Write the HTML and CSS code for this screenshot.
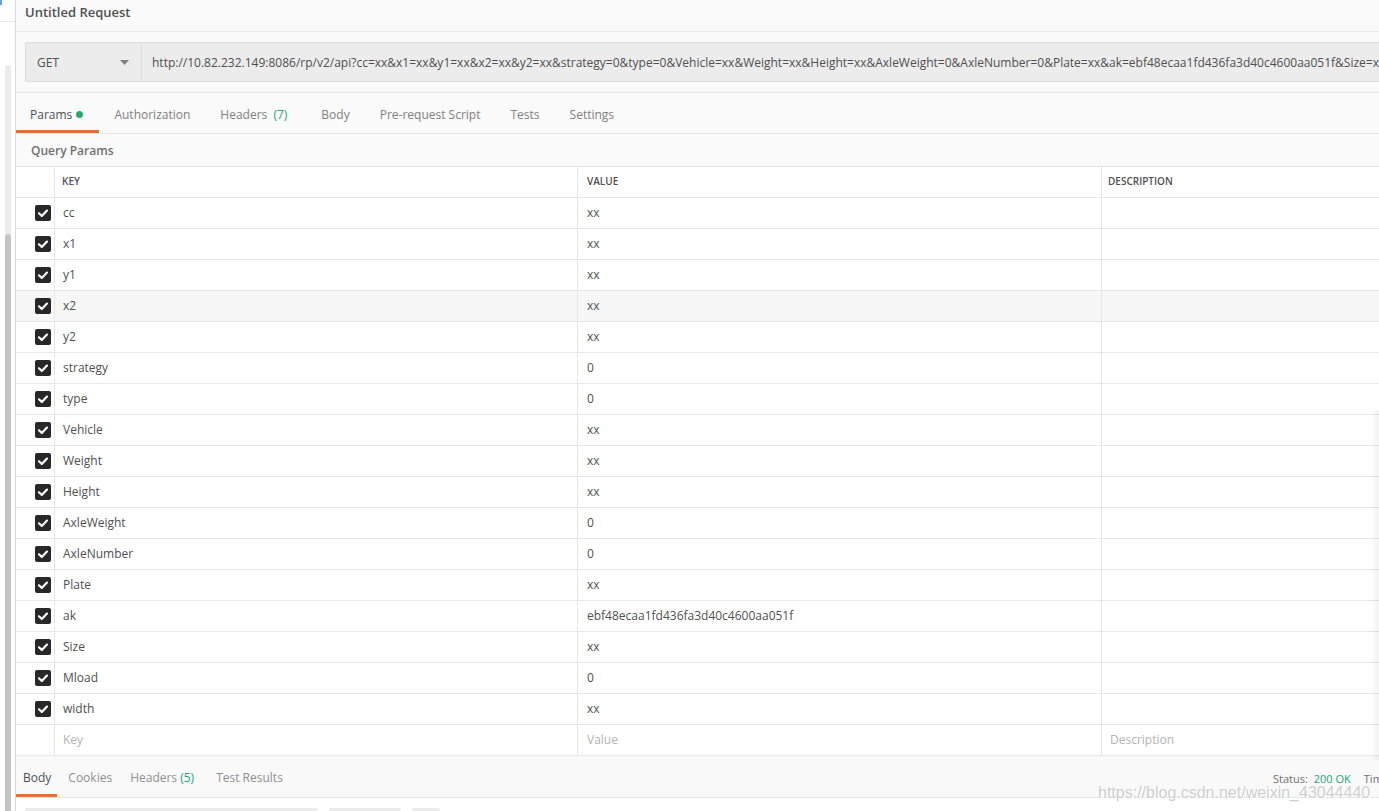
FILE: index.html
```html
<!DOCTYPE html>
<html>
<head>
<meta charset="utf-8">
<link rel="stylesheet" href="styles.css">
</head>
<body>
<div class="app">
  <aside class="sidebar">
    <div class="side-blue"></div>
    <div class="side-line"></div>
    <div class="track"><div class="thumb"></div></div>
  </aside>
  <main class="main">
    <div class="title-bar">Untitled Request</div>
    <div class="url-section">
      <div class="url-row">
        <div class="method">GET<svg class="caret" width="9" height="5" viewBox="0 0 9 5"><path d="M0 0h9L4.5 5z" fill="#808080"/></svg></div>
        <div class="url">http://10.82.232.149:8086/rp/v2/api?cc=xx&amp;x1=xx&amp;y1=xx&amp;x2=xx&amp;y2=xx&amp;strategy=0&amp;type=0&amp;Vehicle=xx&amp;Weight=xx&amp;Height=xx&amp;AxleWeight=0&amp;AxleNumber=0&amp;Plate=xx&amp;ak=ebf48ecaa1fd436fa3d40c4600aa051f&amp;Size=xx&amp;Mload=0&amp;width=xx</div>
      </div>
    </div>
    <nav class="tabs">
      <div class="tab active">Params <span class="dot"></span></div>
      <div class="tab">Authorization</div>
      <div class="tab with-count">Headers <span class="count">(7)</span></div>
      <div class="tab">Body</div>
      <div class="tab">Pre-request Script</div>
      <div class="tab">Tests</div>
      <div class="tab">Settings</div>
    </nav>
    <div class="section-label">Query Params</div>
    <div class="table">
      <div class="row head"><div class="c chk"></div><div class="c key">KEY</div><div class="c val">VALUE</div><div class="c desc">DESCRIPTION</div></div>
      <div class="row"><div class="c chk"><span class="box"><svg width="16" height="16" viewBox="0 0 16 16"><path d="M4 8.3l2.8 2.7L12 5.6" fill="none" stroke="#fff" stroke-width="2.2" stroke-linecap="round" stroke-linejoin="round"/></svg></span></div><div class="c key">cc</div><div class="c val">xx</div><div class="c desc"></div></div>
      <div class="row"><div class="c chk"><span class="box"><svg width="16" height="16" viewBox="0 0 16 16"><path d="M4 8.3l2.8 2.7L12 5.6" fill="none" stroke="#fff" stroke-width="2.2" stroke-linecap="round" stroke-linejoin="round"/></svg></span></div><div class="c key">x1</div><div class="c val">xx</div><div class="c desc"></div></div>
      <div class="row"><div class="c chk"><span class="box"><svg width="16" height="16" viewBox="0 0 16 16"><path d="M4 8.3l2.8 2.7L12 5.6" fill="none" stroke="#fff" stroke-width="2.2" stroke-linecap="round" stroke-linejoin="round"/></svg></span></div><div class="c key">y1</div><div class="c val">xx</div><div class="c desc"></div></div>
      <div class="row hover"><div class="c chk"><span class="box"><svg width="16" height="16" viewBox="0 0 16 16"><path d="M4 8.3l2.8 2.7L12 5.6" fill="none" stroke="#fff" stroke-width="2.2" stroke-linecap="round" stroke-linejoin="round"/></svg></span></div><div class="c key">x2</div><div class="c val">xx</div><div class="c desc"></div></div>
      <div class="row"><div class="c chk"><span class="box"><svg width="16" height="16" viewBox="0 0 16 16"><path d="M4 8.3l2.8 2.7L12 5.6" fill="none" stroke="#fff" stroke-width="2.2" stroke-linecap="round" stroke-linejoin="round"/></svg></span></div><div class="c key">y2</div><div class="c val">xx</div><div class="c desc"></div></div>
      <div class="row"><div class="c chk"><span class="box"><svg width="16" height="16" viewBox="0 0 16 16"><path d="M4 8.3l2.8 2.7L12 5.6" fill="none" stroke="#fff" stroke-width="2.2" stroke-linecap="round" stroke-linejoin="round"/></svg></span></div><div class="c key">strategy</div><div class="c val">0</div><div class="c desc"></div></div>
      <div class="row"><div class="c chk"><span class="box"><svg width="16" height="16" viewBox="0 0 16 16"><path d="M4 8.3l2.8 2.7L12 5.6" fill="none" stroke="#fff" stroke-width="2.2" stroke-linecap="round" stroke-linejoin="round"/></svg></span></div><div class="c key">type</div><div class="c val">0</div><div class="c desc"></div></div>
      <div class="row"><div class="c chk"><span class="box"><svg width="16" height="16" viewBox="0 0 16 16"><path d="M4 8.3l2.8 2.7L12 5.6" fill="none" stroke="#fff" stroke-width="2.2" stroke-linecap="round" stroke-linejoin="round"/></svg></span></div><div class="c key">Vehicle</div><div class="c val">xx</div><div class="c desc"></div></div>
      <div class="row"><div class="c chk"><span class="box"><svg width="16" height="16" viewBox="0 0 16 16"><path d="M4 8.3l2.8 2.7L12 5.6" fill="none" stroke="#fff" stroke-width="2.2" stroke-linecap="round" stroke-linejoin="round"/></svg></span></div><div class="c key">Weight</div><div class="c val">xx</div><div class="c desc"></div></div>
      <div class="row"><div class="c chk"><span class="box"><svg width="16" height="16" viewBox="0 0 16 16"><path d="M4 8.3l2.8 2.7L12 5.6" fill="none" stroke="#fff" stroke-width="2.2" stroke-linecap="round" stroke-linejoin="round"/></svg></span></div><div class="c key">Height</div><div class="c val">xx</div><div class="c desc"></div></div>
      <div class="row"><div class="c chk"><span class="box"><svg width="16" height="16" viewBox="0 0 16 16"><path d="M4 8.3l2.8 2.7L12 5.6" fill="none" stroke="#fff" stroke-width="2.2" stroke-linecap="round" stroke-linejoin="round"/></svg></span></div><div class="c key">AxleWeight</div><div class="c val">0</div><div class="c desc"></div></div>
      <div class="row"><div class="c chk"><span class="box"><svg width="16" height="16" viewBox="0 0 16 16"><path d="M4 8.3l2.8 2.7L12 5.6" fill="none" stroke="#fff" stroke-width="2.2" stroke-linecap="round" stroke-linejoin="round"/></svg></span></div><div class="c key">AxleNumber</div><div class="c val">0</div><div class="c desc"></div></div>
      <div class="row"><div class="c chk"><span class="box"><svg width="16" height="16" viewBox="0 0 16 16"><path d="M4 8.3l2.8 2.7L12 5.6" fill="none" stroke="#fff" stroke-width="2.2" stroke-linecap="round" stroke-linejoin="round"/></svg></span></div><div class="c key">Plate</div><div class="c val">xx</div><div class="c desc"></div></div>
      <div class="row"><div class="c chk"><span class="box"><svg width="16" height="16" viewBox="0 0 16 16"><path d="M4 8.3l2.8 2.7L12 5.6" fill="none" stroke="#fff" stroke-width="2.2" stroke-linecap="round" stroke-linejoin="round"/></svg></span></div><div class="c key">ak</div><div class="c val">ebf48ecaa1fd436fa3d40c4600aa051f</div><div class="c desc"></div></div>
      <div class="row"><div class="c chk"><span class="box"><svg width="16" height="16" viewBox="0 0 16 16"><path d="M4 8.3l2.8 2.7L12 5.6" fill="none" stroke="#fff" stroke-width="2.2" stroke-linecap="round" stroke-linejoin="round"/></svg></span></div><div class="c key">Size</div><div class="c val">xx</div><div class="c desc"></div></div>
      <div class="row"><div class="c chk"><span class="box"><svg width="16" height="16" viewBox="0 0 16 16"><path d="M4 8.3l2.8 2.7L12 5.6" fill="none" stroke="#fff" stroke-width="2.2" stroke-linecap="round" stroke-linejoin="round"/></svg></span></div><div class="c key">Mload</div><div class="c val">0</div><div class="c desc"></div></div>
      <div class="row"><div class="c chk"><span class="box"><svg width="16" height="16" viewBox="0 0 16 16"><path d="M4 8.3l2.8 2.7L12 5.6" fill="none" stroke="#fff" stroke-width="2.2" stroke-linecap="round" stroke-linejoin="round"/></svg></span></div><div class="c key">width</div><div class="c val">xx</div><div class="c desc"></div></div>
      <div class="row placeholder"><div class="c chk"></div><div class="c key">Key</div><div class="c val">Value</div><div class="c desc">Description</div></div>
    </div>
    <div class="resp-bar">
      <nav class="resp-tabs">
        <div class="rtab active">Body</div>
        <div class="rtab">Cookies</div>
        <div class="rtab with-count">Headers <span class="count">(5)</span></div>
        <div class="rtab">Test Results</div>
      </nav>
      <div class="status">Status: <span class="ok">200 OK</span><span class="time">Time</span></div>
    </div>
    <div class="resp-tools">
      <div class="tool t1"></div>
      <div class="tool t2"></div>
      <div class="tool t3"></div>
    </div>
    <div class="edge-shadow"></div>
    <div class="watermark">https://blog.csdn.net/weixin_43044440</div>
  </main>
</div>
</body>
</html>
```
FILE: styles.css
```css
* { box-sizing: border-box; }
html, body { margin: 0; padding: 0; }
body {
  width: 1379px;
  height: 811px;
  overflow: hidden;
  font-family: "Open Sans", "Noto Sans", sans-serif;
  font-size: 12px;
  color: #505050;
  background: #fafafa;
}
.app { display: flex; height: 811px; }
.sidebar {
  width: 16px;
  flex: 0 0 16px;
  background: #fff;
  border-right: 1px solid #d9d9d9;
  position: relative;
}
.side-blue {
  position: absolute; left: 0; top: 0; width: 2px; height: 5px; background: #5aa6e8;
}
.side-line {
  position: absolute; left: 0; top: 21px; width: 15px; height: 1px; background: #e8e8e8;
}
.track {
  position: absolute; left: 5px; top: 65px; width: 6px; bottom: 0;
  background: #ececec; border-radius: 3px 3px 0 0;
}
.thumb {
  position: absolute; left: 0; right: 0; top: 169px; bottom: 0;
  background: #c5c5c5; border-radius: 3px 3px 0 0;
}
.main {
  flex: 1;
  min-width: 0;
  background: #fafafa;
  position: relative;
  overflow: hidden;
}
.title-bar {
  height: 32px;
  padding: 3px 9px 0;
  line-height: 18px;
  font-size: 13px;
  font-weight: 600;
  color: #505050;
  border-bottom: 1px solid #ececec;
}
.url-section {
  padding: 10px 0 10px 9px;
  border-bottom: 1px solid #e6e6e6;
  height: 61px;
}
.url-row {
  display: flex;
  height: 40px;
  border: 1px solid #dcdcdc;
  border-right: none;
  border-radius: 3px 0 0 3px;
  background: #ececec;
  overflow: hidden;
}
.method {
  width: 116px;
  flex: 0 0 116px;
  display: flex;
  align-items: center;
  justify-content: space-between;
  padding: 1px 12px 0 11px;
  border-right: 1px solid #dcdcdc;
  font-size: 12px;
  color: #505050;
}
.url {
  flex: 1;
  min-width: 0;
  display: flex;
  align-items: center;
  padding: 1px 0 0 10px;
  white-space: nowrap;
  overflow: hidden;
  font-size: 12px;
  color: #505050;
}
.tabs {
  display: flex;
  height: 41px;
  border-bottom: 1px solid #e6e6e6;
}
.tab {
  padding: 4px 15px 0;
  line-height: 36px;
  height: 40px;
  color: #808080;
  white-space: nowrap;
}
.tab.with-count { padding-right: 19px; }
.tab.with-count .count { margin-left: 3px; }
.tab.active {
  color: #505050;
  padding: 4px 16px 0 14px;
  box-shadow: inset 0 -3px 0 #e06f44;
}
.dot {
  display: inline-block;
  width: 7px; height: 7px;
  border-radius: 50%;
  background: #26a96f;
  vertical-align: 1px;
  margin-left: 1px;
}
.count { color: #26a37a; }
.section-label {
  height: 32px;
  line-height: 34px;
  padding-left: 15px;
  font-weight: 600;
  color: #707070;
}
.table {
  width: 1500px;
  background: #fff;
  border-top: 1px solid #e6e6e6;
}
.row {
  display: grid;
  grid-template-columns: 39px 523px 524px 414px;
  height: 31px;
  border-bottom: 1px solid #e6e6e6;
}
.row.hover { background: #f7f7f7; }
.c {
  display: flex;
  align-items: center;
  padding: 0 0 2px 9px;
  border-right: 1px solid #e6e6e6;
  white-space: nowrap;
  color: #505050;
}
.c.key { padding-left: 8px; }
.c.desc { border-right: none; padding-left: 6px; }
.c.chk { justify-content: flex-end; padding: 0 3px 1px 0; }
.box {
  width: 16px; height: 16px;
  border-radius: 2px;
  background: #282828;
  display: block;
}
.box svg { display: block; }
.row.head .c {
  font-size: 10px;
  font-weight: 600;
  color: #505050;
}
.row.head .c.key { padding-left: 7px; }
.row.head .c.desc { padding-left: 6px; }
.row.placeholder .c { color: #b3b3b3; }
.row.placeholder .c.key { padding-left: 8px; }
.row.placeholder .c.val { padding-left: 9px; }
.row.placeholder .c.desc { padding-left: 8px; }
.resp-bar {
  display: flex;
  justify-content: space-between;
  height: 42px;
  border-bottom: 1px solid #e6e6e6;
  background: #f9f9f9;
}
.resp-tabs { display: flex; }
.rtab {
  padding: 0 7px 0 11px;
  line-height: 44px;
  height: 41px;
  color: #909090;
  white-space: nowrap;
}
.rtab.with-count { padding-right: 11px; }
.rtab.active {
  color: #505050;
  padding: 0 6px 0 7px;
  box-shadow: inset 0 -3px 0 #e06f44;
}
.status {
  padding-top: 15px;
  font-size: 11px;
  color: #707070;
  white-space: nowrap;
  margin-right: -10px;
}
.ok { color: #26a37a; margin-left: 3px; }
.time { margin-left: 13px; }
.resp-tools {
  display: flex;
  gap: 11px;
  padding: 10px 0 0 9px;
  background: #fff;
  height: 20px;
}
.tool { height: 12px; background: #ececec; border-radius: 2px; }
.t1 { width: 293px; }
.t2 { width: 72px; }
.t3 { width: 28px; }
.edge-shadow {
  position: absolute;
  right: 0; top: 410px;
  width: 8px; height: 350px;
  background: linear-gradient(to right, rgba(0,0,0,0), rgba(0,0,0,0.05));
}
.watermark {
  position: absolute;
  left: 1082px;
  top: 784px;
  font-family: "Liberation Sans", Arial, sans-serif;
  font-size: 16px;
  color: rgba(200,200,200,0.9);
  text-shadow: 0 0 2px #fff, 1px 1px 0 #fff;
  white-space: nowrap;
}
```
